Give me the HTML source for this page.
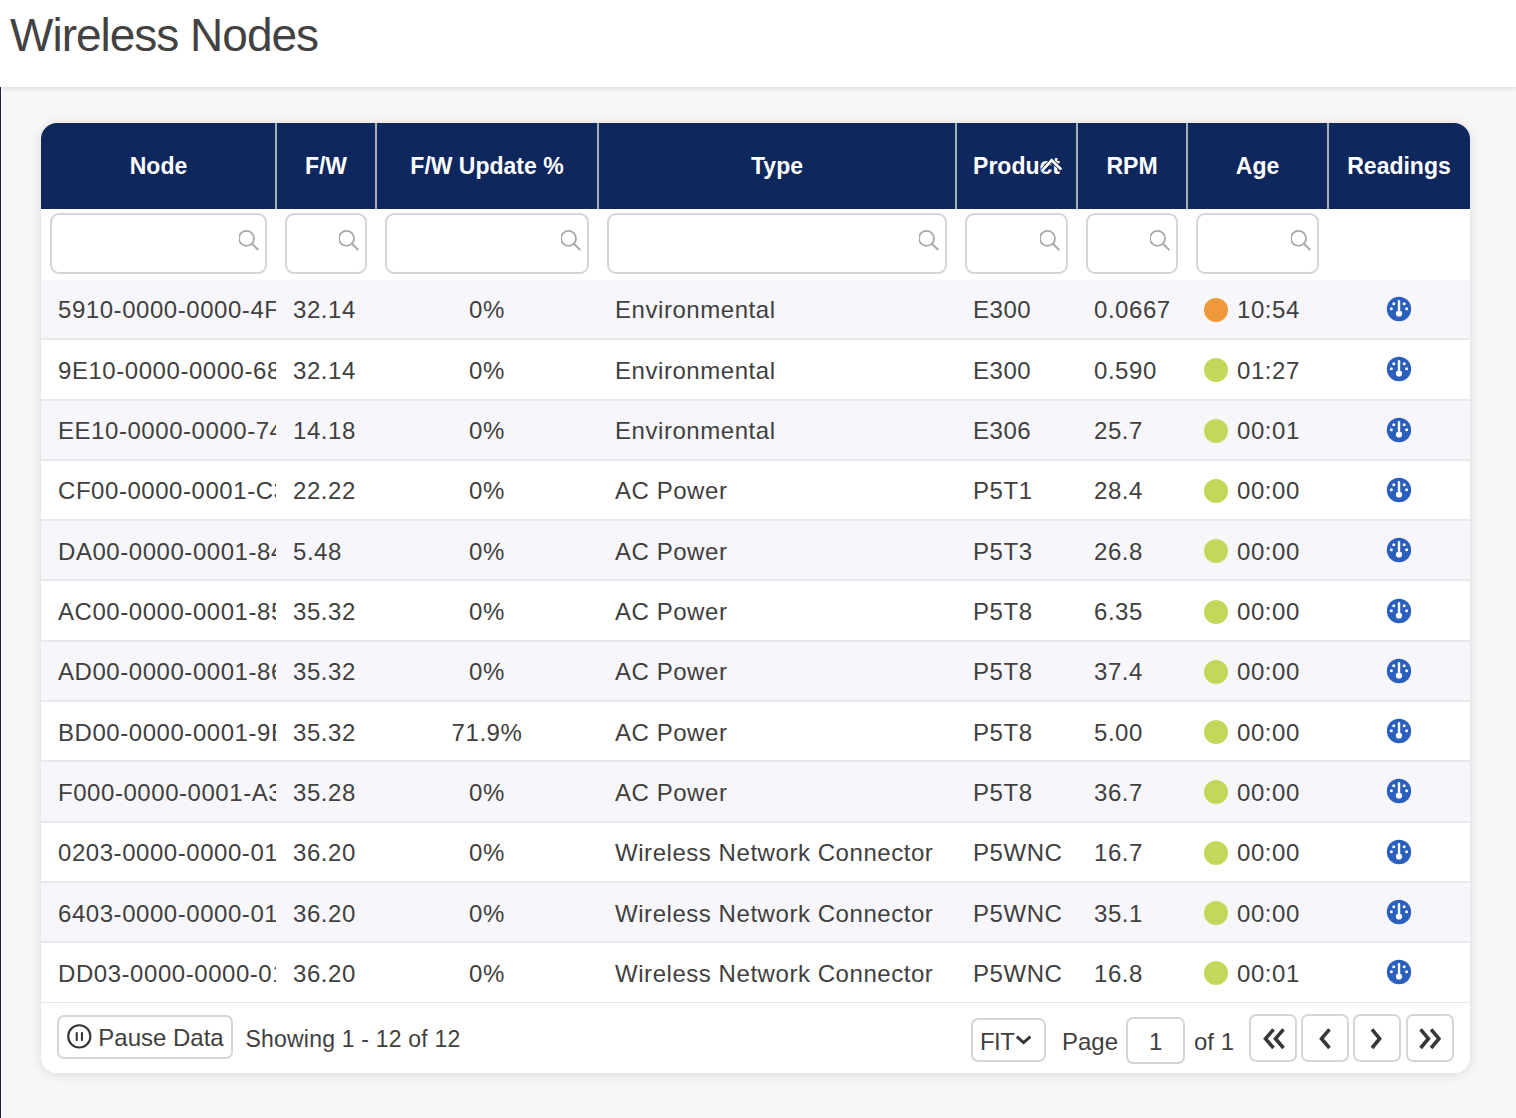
<!DOCTYPE html>
<html><head><meta charset="utf-8"><title>Wireless Nodes</title>
<style>
*{box-sizing:border-box;margin:0;padding:0}
html,body{width:1516px;height:1118px;overflow:hidden;background:#f7f7f7;font-family:"Liberation Sans",sans-serif;color:#404040}
.topbar{position:absolute;left:0;top:0;width:1516px;height:87px;background:#fff;box-shadow:0 1px 6px rgba(0,0,0,0.15);z-index:2}
.title{position:absolute;left:10px;top:8px;font-size:46px;color:#424242;letter-spacing:-1.0px;white-space:nowrap}
.leftline{position:absolute;left:0;top:87px;width:1px;height:1031px;background:#1b2140;z-index:3}
.leftline2{position:absolute;left:1px;top:87px;width:1px;height:1031px;background:#fcfcfc;z-index:3}
.card{position:absolute;left:41px;top:123px;width:1429px;height:950px;background:#fff;border-radius:16px;box-shadow:0 1px 12px rgba(0,0,0,0.13);overflow:hidden}
.thead{position:absolute;left:0;top:0;width:1429px;height:86px;background:#0e275d}
.th{position:absolute;top:0;height:86px;color:#fff;font-weight:bold;font-size:23px;text-align:center;line-height:86px;white-space:nowrap}
.div{position:absolute;top:0;width:2px;height:86px;background:#a9adb8}
.inp{position:absolute;top:90px;height:60.5px;border:2px solid #d5d5d5;border-radius:9px;background:#fff}
.srch{position:absolute;right:4px;top:14px}
.row{position:absolute;left:0;width:1429px;border-bottom:2px solid #e9e9ed}
.odd{background:#f7f7fb}
.even{background:#fff}
.cell{position:absolute;top:0;height:100%;overflow:hidden;white-space:nowrap;font-size:24px;letter-spacing:0.55px;color:#404040}
.ct{position:absolute;top:16.5px;left:17px}
.center .ct{left:0;right:0;text-align:center}
.dot{position:absolute;left:17px;width:24px;height:24px;border-radius:50%}
.dot.o{background:#f0993a}
.dot.g{background:#c2d85a}
.gauge{position:absolute;left:58.35px;top:16px}
.foot{position:absolute;left:0;top:880px;width:1429px;height:70px;background:#fff}
.btn{position:absolute;border:2px solid #d6d6d6;border-radius:7px;background:#fff}
.ftxt{position:absolute;font-size:24px;color:#404040;white-space:nowrap}
</style></head><body>
<div class="topbar"><div class="title">Wireless Nodes</div></div>
<div class="leftline"></div><div class="leftline2"></div>
<div class="card">
<div class="thead">

<div class="th" style="left:0px;width:235px">Node</div>
<div class="th" style="left:235px;width:100px">F/W</div>
<div class="th" style="left:335px;width:222px">F/W Update %</div>
<div class="th" style="left:557px;width:358px">Type</div>
<div class="th" style="left:915px;width:121px">Product</div>
<div class="th" style="left:1036px;width:110px">RPM</div>
<div class="th" style="left:1146px;width:141px">Age</div>
<div class="th" style="left:1287px;width:142px">Readings</div>
<div class="div" style="left:234px"></div>
<div class="div" style="left:334px"></div>
<div class="div" style="left:556px"></div>
<div class="div" style="left:914px"></div>
<div class="div" style="left:1035px"></div>
<div class="div" style="left:1145px"></div>
<div class="div" style="left:1286px"></div>
<svg style="position:absolute;left:0;top:0" width="1429" height="86"><path d="M1001.3 47.6 L1010.6 37.2 L1020.3 46.4" fill="none" stroke="#0a2152" stroke-width="4.2"/><path d="M1001.3 47.6 L1010.6 37.2 L1020.3 46.4" fill="none" stroke="#fff" stroke-width="2.7"/></svg>
</div>
<div class="inp" style="left:8.5px;width:217.5px"><svg class="srch" viewBox="0 0 22 22" width="22" height="22"><circle cx="7.5" cy="9.4" r="7.5" fill="none" stroke="#a8a8a8" stroke-width="1.8"/><line x1="12.9" y1="14.8" x2="19.3" y2="21" stroke="#a8a8a8" stroke-width="1.9"/></svg></div>
<div class="inp" style="left:243.5px;width:82.5px"><svg class="srch" viewBox="0 0 22 22" width="22" height="22"><circle cx="7.5" cy="9.4" r="7.5" fill="none" stroke="#a8a8a8" stroke-width="1.8"/><line x1="12.9" y1="14.8" x2="19.3" y2="21" stroke="#a8a8a8" stroke-width="1.9"/></svg></div>
<div class="inp" style="left:343.5px;width:204.5px"><svg class="srch" viewBox="0 0 22 22" width="22" height="22"><circle cx="7.5" cy="9.4" r="7.5" fill="none" stroke="#a8a8a8" stroke-width="1.8"/><line x1="12.9" y1="14.8" x2="19.3" y2="21" stroke="#a8a8a8" stroke-width="1.9"/></svg></div>
<div class="inp" style="left:565.5px;width:340.5px"><svg class="srch" viewBox="0 0 22 22" width="22" height="22"><circle cx="7.5" cy="9.4" r="7.5" fill="none" stroke="#a8a8a8" stroke-width="1.8"/><line x1="12.9" y1="14.8" x2="19.3" y2="21" stroke="#a8a8a8" stroke-width="1.9"/></svg></div>
<div class="inp" style="left:923.5px;width:103.5px"><svg class="srch" viewBox="0 0 22 22" width="22" height="22"><circle cx="7.5" cy="9.4" r="7.5" fill="none" stroke="#a8a8a8" stroke-width="1.8"/><line x1="12.9" y1="14.8" x2="19.3" y2="21" stroke="#a8a8a8" stroke-width="1.9"/></svg></div>
<div class="inp" style="left:1044.5px;width:92.5px"><svg class="srch" viewBox="0 0 22 22" width="22" height="22"><circle cx="7.5" cy="9.4" r="7.5" fill="none" stroke="#a8a8a8" stroke-width="1.8"/><line x1="12.9" y1="14.8" x2="19.3" y2="21" stroke="#a8a8a8" stroke-width="1.9"/></svg></div>
<div class="inp" style="left:1154.5px;width:123.5px"><svg class="srch" viewBox="0 0 22 22" width="22" height="22"><circle cx="7.5" cy="9.4" r="7.5" fill="none" stroke="#a8a8a8" stroke-width="1.8"/><line x1="12.9" y1="14.8" x2="19.3" y2="21" stroke="#a8a8a8" stroke-width="1.9"/></svg></div>
<div class="row odd" style="top:156.90px;height:60.32px">
<div class="cell" style="left:0px;width:235px"><span class="ct">5910-0000-0000-4F12</span></div>
<div class="cell" style="left:235px;width:100px"><span class="ct">32.14</span></div>
<div class="cell center" style="left:335px;width:222px"><span class="ct">0%</span></div>
<div class="cell" style="left:557px;width:358px"><span class="ct">Environmental</span></div>
<div class="cell" style="left:915px;width:121px"><span class="ct">E300</span></div>
<div class="cell" style="left:1036px;width:110px"><span class="ct">0.0667</span></div>
<div class="cell" style="left:1146px;width:141px"><span class="dot o" style="top:18px"></span><span class="ct" style="left:50px">10:54</span></div>
<div class="cell" style="left:1287px;width:142px"><svg class="gauge" viewBox="0 0 26 26" width="26" height="26"><circle cx="13" cy="13" r="12.2" fill="#2b5fbd"/><rect x="11.8" y="3.9" width="2.4" height="11" rx="1.2" fill="#fff"/><circle cx="13" cy="17.5" r="3.1" fill="#fff"/><circle cx="7.75" cy="7.65" r="1.5" fill="#fff"/><circle cx="18.2" cy="7.65" r="1.5" fill="#fff"/><circle cx="5.35" cy="12.85" r="1.5" fill="#fff"/><circle cx="20.6" cy="12.85" r="1.5" fill="#fff"/></svg></div>
</div>
<div class="row even" style="top:217.22px;height:60.32px">
<div class="cell" style="left:0px;width:235px"><span class="ct">9E10-0000-0000-6812</span></div>
<div class="cell" style="left:235px;width:100px"><span class="ct">32.14</span></div>
<div class="cell center" style="left:335px;width:222px"><span class="ct">0%</span></div>
<div class="cell" style="left:557px;width:358px"><span class="ct">Environmental</span></div>
<div class="cell" style="left:915px;width:121px"><span class="ct">E300</span></div>
<div class="cell" style="left:1036px;width:110px"><span class="ct">0.590</span></div>
<div class="cell" style="left:1146px;width:141px"><span class="dot g" style="top:18px"></span><span class="ct" style="left:50px">01:27</span></div>
<div class="cell" style="left:1287px;width:142px"><svg class="gauge" viewBox="0 0 26 26" width="26" height="26"><circle cx="13" cy="13" r="12.2" fill="#2b5fbd"/><rect x="11.8" y="3.9" width="2.4" height="11" rx="1.2" fill="#fff"/><circle cx="13" cy="17.5" r="3.1" fill="#fff"/><circle cx="7.75" cy="7.65" r="1.5" fill="#fff"/><circle cx="18.2" cy="7.65" r="1.5" fill="#fff"/><circle cx="5.35" cy="12.85" r="1.5" fill="#fff"/><circle cx="20.6" cy="12.85" r="1.5" fill="#fff"/></svg></div>
</div>
<div class="row odd" style="top:277.54px;height:60.32px">
<div class="cell" style="left:0px;width:235px"><span class="ct">EE10-0000-0000-7412</span></div>
<div class="cell" style="left:235px;width:100px"><span class="ct">14.18</span></div>
<div class="cell center" style="left:335px;width:222px"><span class="ct">0%</span></div>
<div class="cell" style="left:557px;width:358px"><span class="ct">Environmental</span></div>
<div class="cell" style="left:915px;width:121px"><span class="ct">E306</span></div>
<div class="cell" style="left:1036px;width:110px"><span class="ct">25.7</span></div>
<div class="cell" style="left:1146px;width:141px"><span class="dot g" style="top:18px"></span><span class="ct" style="left:50px">00:01</span></div>
<div class="cell" style="left:1287px;width:142px"><svg class="gauge" viewBox="0 0 26 26" width="26" height="26"><circle cx="13" cy="13" r="12.2" fill="#2b5fbd"/><rect x="11.8" y="3.9" width="2.4" height="11" rx="1.2" fill="#fff"/><circle cx="13" cy="17.5" r="3.1" fill="#fff"/><circle cx="7.75" cy="7.65" r="1.5" fill="#fff"/><circle cx="18.2" cy="7.65" r="1.5" fill="#fff"/><circle cx="5.35" cy="12.85" r="1.5" fill="#fff"/><circle cx="20.6" cy="12.85" r="1.5" fill="#fff"/></svg></div>
</div>
<div class="row even" style="top:337.86px;height:60.32px">
<div class="cell" style="left:0px;width:235px"><span class="ct">CF00-0000-0001-C312</span></div>
<div class="cell" style="left:235px;width:100px"><span class="ct">22.22</span></div>
<div class="cell center" style="left:335px;width:222px"><span class="ct">0%</span></div>
<div class="cell" style="left:557px;width:358px"><span class="ct">AC Power</span></div>
<div class="cell" style="left:915px;width:121px"><span class="ct">P5T1</span></div>
<div class="cell" style="left:1036px;width:110px"><span class="ct">28.4</span></div>
<div class="cell" style="left:1146px;width:141px"><span class="dot g" style="top:18px"></span><span class="ct" style="left:50px">00:00</span></div>
<div class="cell" style="left:1287px;width:142px"><svg class="gauge" viewBox="0 0 26 26" width="26" height="26"><circle cx="13" cy="13" r="12.2" fill="#2b5fbd"/><rect x="11.8" y="3.9" width="2.4" height="11" rx="1.2" fill="#fff"/><circle cx="13" cy="17.5" r="3.1" fill="#fff"/><circle cx="7.75" cy="7.65" r="1.5" fill="#fff"/><circle cx="18.2" cy="7.65" r="1.5" fill="#fff"/><circle cx="5.35" cy="12.85" r="1.5" fill="#fff"/><circle cx="20.6" cy="12.85" r="1.5" fill="#fff"/></svg></div>
</div>
<div class="row odd" style="top:398.18px;height:60.32px">
<div class="cell" style="left:0px;width:235px"><span class="ct">DA00-0000-0001-8412</span></div>
<div class="cell" style="left:235px;width:100px"><span class="ct">5.48</span></div>
<div class="cell center" style="left:335px;width:222px"><span class="ct">0%</span></div>
<div class="cell" style="left:557px;width:358px"><span class="ct">AC Power</span></div>
<div class="cell" style="left:915px;width:121px"><span class="ct">P5T3</span></div>
<div class="cell" style="left:1036px;width:110px"><span class="ct">26.8</span></div>
<div class="cell" style="left:1146px;width:141px"><span class="dot g" style="top:18px"></span><span class="ct" style="left:50px">00:00</span></div>
<div class="cell" style="left:1287px;width:142px"><svg class="gauge" viewBox="0 0 26 26" width="26" height="26"><circle cx="13" cy="13" r="12.2" fill="#2b5fbd"/><rect x="11.8" y="3.9" width="2.4" height="11" rx="1.2" fill="#fff"/><circle cx="13" cy="17.5" r="3.1" fill="#fff"/><circle cx="7.75" cy="7.65" r="1.5" fill="#fff"/><circle cx="18.2" cy="7.65" r="1.5" fill="#fff"/><circle cx="5.35" cy="12.85" r="1.5" fill="#fff"/><circle cx="20.6" cy="12.85" r="1.5" fill="#fff"/></svg></div>
</div>
<div class="row even" style="top:458.50px;height:60.32px">
<div class="cell" style="left:0px;width:235px"><span class="ct">AC00-0000-0001-8512</span></div>
<div class="cell" style="left:235px;width:100px"><span class="ct">35.32</span></div>
<div class="cell center" style="left:335px;width:222px"><span class="ct">0%</span></div>
<div class="cell" style="left:557px;width:358px"><span class="ct">AC Power</span></div>
<div class="cell" style="left:915px;width:121px"><span class="ct">P5T8</span></div>
<div class="cell" style="left:1036px;width:110px"><span class="ct">6.35</span></div>
<div class="cell" style="left:1146px;width:141px"><span class="dot g" style="top:18px"></span><span class="ct" style="left:50px">00:00</span></div>
<div class="cell" style="left:1287px;width:142px"><svg class="gauge" viewBox="0 0 26 26" width="26" height="26"><circle cx="13" cy="13" r="12.2" fill="#2b5fbd"/><rect x="11.8" y="3.9" width="2.4" height="11" rx="1.2" fill="#fff"/><circle cx="13" cy="17.5" r="3.1" fill="#fff"/><circle cx="7.75" cy="7.65" r="1.5" fill="#fff"/><circle cx="18.2" cy="7.65" r="1.5" fill="#fff"/><circle cx="5.35" cy="12.85" r="1.5" fill="#fff"/><circle cx="20.6" cy="12.85" r="1.5" fill="#fff"/></svg></div>
</div>
<div class="row odd" style="top:518.82px;height:60.32px">
<div class="cell" style="left:0px;width:235px"><span class="ct">AD00-0000-0001-8612</span></div>
<div class="cell" style="left:235px;width:100px"><span class="ct">35.32</span></div>
<div class="cell center" style="left:335px;width:222px"><span class="ct">0%</span></div>
<div class="cell" style="left:557px;width:358px"><span class="ct">AC Power</span></div>
<div class="cell" style="left:915px;width:121px"><span class="ct">P5T8</span></div>
<div class="cell" style="left:1036px;width:110px"><span class="ct">37.4</span></div>
<div class="cell" style="left:1146px;width:141px"><span class="dot g" style="top:18px"></span><span class="ct" style="left:50px">00:00</span></div>
<div class="cell" style="left:1287px;width:142px"><svg class="gauge" viewBox="0 0 26 26" width="26" height="26"><circle cx="13" cy="13" r="12.2" fill="#2b5fbd"/><rect x="11.8" y="3.9" width="2.4" height="11" rx="1.2" fill="#fff"/><circle cx="13" cy="17.5" r="3.1" fill="#fff"/><circle cx="7.75" cy="7.65" r="1.5" fill="#fff"/><circle cx="18.2" cy="7.65" r="1.5" fill="#fff"/><circle cx="5.35" cy="12.85" r="1.5" fill="#fff"/><circle cx="20.6" cy="12.85" r="1.5" fill="#fff"/></svg></div>
</div>
<div class="row even" style="top:579.14px;height:60.32px">
<div class="cell" style="left:0px;width:235px"><span class="ct">BD00-0000-0001-9B12</span></div>
<div class="cell" style="left:235px;width:100px"><span class="ct">35.32</span></div>
<div class="cell center" style="left:335px;width:222px"><span class="ct">71.9%</span></div>
<div class="cell" style="left:557px;width:358px"><span class="ct">AC Power</span></div>
<div class="cell" style="left:915px;width:121px"><span class="ct">P5T8</span></div>
<div class="cell" style="left:1036px;width:110px"><span class="ct">5.00</span></div>
<div class="cell" style="left:1146px;width:141px"><span class="dot g" style="top:18px"></span><span class="ct" style="left:50px">00:00</span></div>
<div class="cell" style="left:1287px;width:142px"><svg class="gauge" viewBox="0 0 26 26" width="26" height="26"><circle cx="13" cy="13" r="12.2" fill="#2b5fbd"/><rect x="11.8" y="3.9" width="2.4" height="11" rx="1.2" fill="#fff"/><circle cx="13" cy="17.5" r="3.1" fill="#fff"/><circle cx="7.75" cy="7.65" r="1.5" fill="#fff"/><circle cx="18.2" cy="7.65" r="1.5" fill="#fff"/><circle cx="5.35" cy="12.85" r="1.5" fill="#fff"/><circle cx="20.6" cy="12.85" r="1.5" fill="#fff"/></svg></div>
</div>
<div class="row odd" style="top:639.46px;height:60.32px">
<div class="cell" style="left:0px;width:235px"><span class="ct">F000-0000-0001-A312</span></div>
<div class="cell" style="left:235px;width:100px"><span class="ct">35.28</span></div>
<div class="cell center" style="left:335px;width:222px"><span class="ct">0%</span></div>
<div class="cell" style="left:557px;width:358px"><span class="ct">AC Power</span></div>
<div class="cell" style="left:915px;width:121px"><span class="ct">P5T8</span></div>
<div class="cell" style="left:1036px;width:110px"><span class="ct">36.7</span></div>
<div class="cell" style="left:1146px;width:141px"><span class="dot g" style="top:18px"></span><span class="ct" style="left:50px">00:00</span></div>
<div class="cell" style="left:1287px;width:142px"><svg class="gauge" viewBox="0 0 26 26" width="26" height="26"><circle cx="13" cy="13" r="12.2" fill="#2b5fbd"/><rect x="11.8" y="3.9" width="2.4" height="11" rx="1.2" fill="#fff"/><circle cx="13" cy="17.5" r="3.1" fill="#fff"/><circle cx="7.75" cy="7.65" r="1.5" fill="#fff"/><circle cx="18.2" cy="7.65" r="1.5" fill="#fff"/><circle cx="5.35" cy="12.85" r="1.5" fill="#fff"/><circle cx="20.6" cy="12.85" r="1.5" fill="#fff"/></svg></div>
</div>
<div class="row even" style="top:699.78px;height:60.32px">
<div class="cell" style="left:0px;width:235px"><span class="ct">0203-0000-0000-0112</span></div>
<div class="cell" style="left:235px;width:100px"><span class="ct">36.20</span></div>
<div class="cell center" style="left:335px;width:222px"><span class="ct">0%</span></div>
<div class="cell" style="left:557px;width:358px"><span class="ct">Wireless Network Connector</span></div>
<div class="cell" style="left:915px;width:121px"><span class="ct">P5WNC</span></div>
<div class="cell" style="left:1036px;width:110px"><span class="ct">16.7</span></div>
<div class="cell" style="left:1146px;width:141px"><span class="dot g" style="top:18px"></span><span class="ct" style="left:50px">00:00</span></div>
<div class="cell" style="left:1287px;width:142px"><svg class="gauge" viewBox="0 0 26 26" width="26" height="26"><circle cx="13" cy="13" r="12.2" fill="#2b5fbd"/><rect x="11.8" y="3.9" width="2.4" height="11" rx="1.2" fill="#fff"/><circle cx="13" cy="17.5" r="3.1" fill="#fff"/><circle cx="7.75" cy="7.65" r="1.5" fill="#fff"/><circle cx="18.2" cy="7.65" r="1.5" fill="#fff"/><circle cx="5.35" cy="12.85" r="1.5" fill="#fff"/><circle cx="20.6" cy="12.85" r="1.5" fill="#fff"/></svg></div>
</div>
<div class="row odd" style="top:760.10px;height:60.32px">
<div class="cell" style="left:0px;width:235px"><span class="ct">6403-0000-0000-0112</span></div>
<div class="cell" style="left:235px;width:100px"><span class="ct">36.20</span></div>
<div class="cell center" style="left:335px;width:222px"><span class="ct">0%</span></div>
<div class="cell" style="left:557px;width:358px"><span class="ct">Wireless Network Connector</span></div>
<div class="cell" style="left:915px;width:121px"><span class="ct">P5WNC</span></div>
<div class="cell" style="left:1036px;width:110px"><span class="ct">35.1</span></div>
<div class="cell" style="left:1146px;width:141px"><span class="dot g" style="top:18px"></span><span class="ct" style="left:50px">00:00</span></div>
<div class="cell" style="left:1287px;width:142px"><svg class="gauge" viewBox="0 0 26 26" width="26" height="26"><circle cx="13" cy="13" r="12.2" fill="#2b5fbd"/><rect x="11.8" y="3.9" width="2.4" height="11" rx="1.2" fill="#fff"/><circle cx="13" cy="17.5" r="3.1" fill="#fff"/><circle cx="7.75" cy="7.65" r="1.5" fill="#fff"/><circle cx="18.2" cy="7.65" r="1.5" fill="#fff"/><circle cx="5.35" cy="12.85" r="1.5" fill="#fff"/><circle cx="20.6" cy="12.85" r="1.5" fill="#fff"/></svg></div>
</div>
<div class="row even" style="top:820.42px;height:60.32px">
<div class="cell" style="left:0px;width:235px"><span class="ct">DD03-0000-0000-0112</span></div>
<div class="cell" style="left:235px;width:100px"><span class="ct">36.20</span></div>
<div class="cell center" style="left:335px;width:222px"><span class="ct">0%</span></div>
<div class="cell" style="left:557px;width:358px"><span class="ct">Wireless Network Connector</span></div>
<div class="cell" style="left:915px;width:121px"><span class="ct">P5WNC</span></div>
<div class="cell" style="left:1036px;width:110px"><span class="ct">16.8</span></div>
<div class="cell" style="left:1146px;width:141px"><span class="dot g" style="top:18px"></span><span class="ct" style="left:50px">00:01</span></div>
<div class="cell" style="left:1287px;width:142px"><svg class="gauge" viewBox="0 0 26 26" width="26" height="26"><circle cx="13" cy="13" r="12.2" fill="#2b5fbd"/><rect x="11.8" y="3.9" width="2.4" height="11" rx="1.2" fill="#fff"/><circle cx="13" cy="17.5" r="3.1" fill="#fff"/><circle cx="7.75" cy="7.65" r="1.5" fill="#fff"/><circle cx="18.2" cy="7.65" r="1.5" fill="#fff"/><circle cx="5.35" cy="12.85" r="1.5" fill="#fff"/><circle cx="20.6" cy="12.85" r="1.5" fill="#fff"/></svg></div>
</div>
<div class="foot">
<div class="btn" style="left:16.3px;top:12.4px;width:175.4px;height:43.6px"><svg style="position:absolute;left:0;top:0" width="40" height="40" viewBox="0 0 40 40"><circle cx="20.3" cy="19.4" r="11.1" fill="none" stroke="#363636" stroke-width="2.1"/><rect x="16.7" y="15.1" width="2.1" height="8.9" rx="1" fill="#363636"/><rect x="21.9" y="15.1" width="2.1" height="8.9" rx="1" fill="#363636"/></svg><span class="ftxt" style="left:39px;top:7px">Pause Data</span></div>
<span class="ftxt" style="left:204.5px;top:22.5px;font-size:23px;letter-spacing:0.2px">Showing 1 - 12 of 12</span>
<div class="btn" style="left:929.5px;top:15.3px;width:75px;height:43.5px"><span class="ftxt" style="left:7.5px;top:8px;letter-spacing:-0.6px">FIT</span><svg style="position:absolute;left:42.5px;top:14px" width="18" height="12" viewBox="0 0 18 12"><path d="M1.8 2.6 L8.6 8.6 L15.4 2.6" fill="none" stroke="#333" stroke-width="2.8"/></svg></div>
<span class="ftxt" style="left:1021px;top:25px">Page</span>
<div class="btn" style="left:1085.2px;top:13.6px;width:59px;height:47.5px"><span class="ftxt" style="left:0;right:0;text-align:center;top:9px">1</span></div>
<span class="ftxt" style="left:1153px;top:25px">of 1</span>
<div class="btn" style="left:1208.0px;top:11px;width:48px;height:48px"><svg style="position:absolute;left:4px;top:4px" width="36" height="36" viewBox="0 0 36 36"><path d="M18.5 9.399999999999999 L10.5 18.7 L18.5 28.0 M28.5 9.399999999999999 L20.5 18.7 L28.5 28.0" fill="none" stroke="#383838" stroke-width="3.6"/></svg></div>
<div class="btn" style="left:1260.2px;top:11px;width:48px;height:48px"><svg style="position:absolute;left:4px;top:4px" width="36" height="36" viewBox="0 0 36 36"><path d="M22.5 9.399999999999999 L14.5 18.7 L22.5 28.0" fill="none" stroke="#383838" stroke-width="3.6"/></svg></div>
<div class="btn" style="left:1312.4px;top:11px;width:48px;height:48px"><svg style="position:absolute;left:4px;top:4px" width="36" height="36" viewBox="0 0 36 36"><path d="M13.0 9.399999999999999 L20.6 18.7 L13.0 28.0" fill="none" stroke="#383838" stroke-width="3.6"/></svg></div>
<div class="btn" style="left:1364.6px;top:11px;width:48px;height:48px"><svg style="position:absolute;left:4px;top:4px" width="36" height="36" viewBox="0 0 36 36"><path d="M8.6 9.399999999999999 L16.4 18.7 L8.6 28.0 M19.1 9.399999999999999 L26.9 18.7 L19.1 28.0" fill="none" stroke="#383838" stroke-width="3.6"/></svg></div>
</div>
</div></body></html>
